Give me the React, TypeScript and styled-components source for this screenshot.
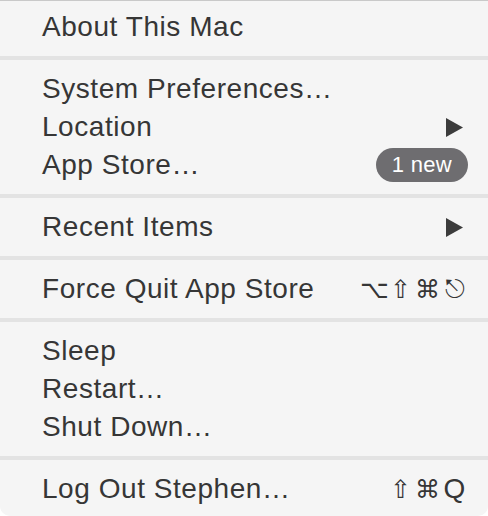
import styled, { createGlobalStyle } from "styled-components";

const GlobalStyle = createGlobalStyle`
    html, body {
        margin: 0;
        padding: 0;
        background: #ffffff;
    }
`;

const StyledMenu = styled.div`
    width: 488px;
    height: 516px;
    box-sizing: border-box;
    background-color: #f5f5f5;
    border-top: 1px solid #c9c9c9;
    border-radius: 0 0 10px 10px;
    padding: 7px 0 8px;
    display: flex;
    flex-direction: column;
    font-family: "Liberation Sans", Arial, sans-serif;
    color: #363636;
`;

const StyledRow = styled.div`
    height: 38px;
    display: flex;
    align-items: center;
    justify-content: space-between;
    padding: 0 20px 0 42px;
    font-size: 28px;
    letter-spacing: 0.55px;
    white-space: nowrap;
`;

const StyledSeparator = styled.div`
    height: 4px;
    margin: 10px 0;
    background-color: #e3e3e3;
`;

const StyledArrow = styled.svg`
    width: 17px;
    height: 19px;
    margin-right: 5px;
    fill: #3c3c3c;
`;

const StyledBadge = styled.span`
    height: 34px;
    padding: 0 16px;
    border-radius: 17px;
    background-color: #6e6d70;
    color: #ffffff;
    font-size: 22px;
    letter-spacing: 0.3px;
    display: flex;
    align-items: center;
`;

const StyledShortcut = styled.span`
    display: flex;
    align-items: center;
    color: #363636;
`;

const StyledKey = styled.span<{ $sans?: boolean }>`
    width: 27px;
    display: inline-block;
    text-align: center;
    letter-spacing: 0;
    font-family: ${(p) => (p.$sans ? `"Liberation Sans", Arial` : `"DejaVu Sans"`)}, sans-serif;
    font-size: ${(p) => (p.$sans ? "28px" : "25px")};
`;

function Arrow() {
    return (
        <StyledArrow viewBox="0 0 17 19">
            <polygon points="0,0 17,9.5 0,19" />
        </StyledArrow>
    );
}

function App() {
    return (
        <>
            <GlobalStyle />
            <StyledMenu>
                <StyledRow>About This Mac</StyledRow>
                <StyledSeparator />
                <StyledRow>System Preferences…</StyledRow>
                <StyledRow>
                    Location
                    <Arrow />
                </StyledRow>
                <StyledRow>
                    App Store…
                    <StyledBadge>1 new</StyledBadge>
                </StyledRow>
                <StyledSeparator />
                <StyledRow>
                    Recent Items
                    <Arrow />
                </StyledRow>
                <StyledSeparator />
                <StyledRow>
                    Force Quit App Store
                    <StyledShortcut>
                        <StyledKey>⌥</StyledKey>
                        <StyledKey>⇧</StyledKey>
                        <StyledKey>⌘</StyledKey>
                        <StyledKey>⎋</StyledKey>
                    </StyledShortcut>
                </StyledRow>
                <StyledSeparator />
                <StyledRow>Sleep</StyledRow>
                <StyledRow>Restart…</StyledRow>
                <StyledRow>Shut Down…</StyledRow>
                <StyledSeparator />
                <StyledRow>
                    Log Out Stephen…
                    <StyledShortcut>
                        <StyledKey>⇧</StyledKey>
                        <StyledKey>⌘</StyledKey>
                        <StyledKey $sans>Q</StyledKey>
                    </StyledShortcut>
                </StyledRow>
            </StyledMenu>
        </>
    );
}

export default App;
